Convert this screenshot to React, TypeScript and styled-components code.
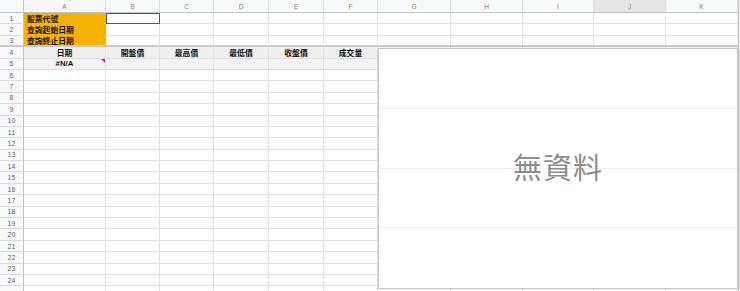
import React from "react";
import styled, { createGlobalStyle } from "styled-components";

const GlobalStyle = createGlobalStyle`
  html, body {
    margin: 0;
    padding: 0;
    background: #ffffff;
    overflow: hidden;
  }
  body {
    font-family: "Liberation Sans", "Noto Sans CJK TC", Arial, sans-serif;
  }
`;

const COLS = ["A", "B", "C", "D", "E", "F", "G", "H", "I", "J", "K"];
const WIDTHS = [82, 54, 54, 55, 55, 54, 73, 72, 71, 72, 72];
const ROW_H = 11.4;

const Sheet = styled.div`
  position: relative;
  width: 740px;
  height: 291px;
  overflow: hidden;
  background: #fff;
`;

const Grid = styled.div`
  display: grid;
  grid-template-columns: 24px ${WIDTHS.map((w) => `${w}px`).join(" ")} 2px;
  grid-auto-rows: ${ROW_H}px;
  grid-template-rows: 13px;
`;

const Corner = styled.div`
  box-sizing: border-box;
  background: #f8f9fa;
  border-right: 1px solid #c4c4c4;
  border-bottom: 1px solid #c4c4c4;
`;

const ColHead = styled.div<{ $active?: boolean }>`
  box-sizing: border-box;
  background: ${(p) => (p.$active ? "#e6e6e6" : "#f8f9fa")};
  border-right: 1px solid #dcdcdc;
  border-bottom: 1px solid #c4c4c4;
  color: #808080;
  font-size: 6.5px;
  display: flex;
  align-items: center;
  justify-content: center;
`;

const RowNum = styled.div<{ $freeze?: boolean }>`
  box-sizing: border-box;
  background: #f8f9fa;
  border-right: 1px solid #c4c4c4;
  border-bottom: ${(p) => (p.$freeze ? "2px solid #c8c8d0" : "1px solid #dcdcdc")};
  color: #666;
  font-size: 7px;
  display: flex;
  align-items: center;
  justify-content: center;
`;

const Cell = styled.div<{
  $bg?: string;
  $freeze?: boolean;
  $center?: boolean;
  $boxed?: boolean;
}>`
  position: relative;
  box-sizing: border-box;
  background: ${(p) => p.$bg || "#fff"};
  border-right: 1px solid ${(p) => (p.$bg === "#f6b400" ? "#f6b400" : "#e2e2e2")};
  border-bottom: ${(p) =>
    p.$freeze ? "2px solid #c8c8d0" : `1px solid ${p.$bg === "#f6b400" ? "#f6b400" : "#e2e2e2"}`};
  ${(p) => (p.$boxed ? "outline: 1px solid #555; outline-offset: -1px;" : "")}
  font-family: "Liberation Sans", "Noto Sans CJK TC", sans-serif;
  font-weight: 700;
  font-size: 7.8px;
  color: #111;
  display: flex;
  align-items: center;
  justify-content: ${(p) => (p.$center ? "center" : "flex-start")};
  padding-left: ${(p) => (p.$center ? "0" : "3px")};
  white-space: nowrap;
  overflow: hidden;
`;

const EdgeCell = styled.div`
  background: #ececec;
  border-left: 1px solid #c8c8c8;
`;

const ErrorMark = styled.span`
  position: absolute;
  top: 0;
  right: 0;
  width: 0;
  height: 0;
  border-top: 4px solid #e0341c;
  border-left: 4px solid transparent;
`;

const Chart = styled.div`
  position: absolute;
  left: 378px;
  top: 48px;
  width: 360px;
  height: 241px;
  box-sizing: border-box;
  background: #fff;
  border: 1px solid #c6c6c6;
  box-shadow: 0 0 2px rgba(0, 0, 0, 0.12);
  display: grid;
  grid-template-rows: repeat(4, 1fr);
`;

const Band = styled.div<{ $last?: boolean }>`
  border-bottom: ${(p) => (p.$last ? "none" : "1px solid #efefef")};
`;

const NoData = styled.div`
  position: absolute;
  inset: 0;
  display: flex;
  align-items: center;
  justify-content: center;
  padding-bottom: 6px;
  font-family: "Noto Sans CJK TC", sans-serif;
  font-size: 29px;
  color: #8c8c8c;
  letter-spacing: 1px;
`;

const labels = ["股票代號", "查詢起始日期", "查詢終止日期"];
const heads = ["日期", "開盤價", "最高價", "最低價", "收盤價", "成交量"];

function cellFor(row: number, col: number) {
  const freeze = row === 3;
  if (row <= 3 && col === 0) {
    return (
      <Cell key={col} $bg="#f6b400" $freeze={freeze}>
        {labels[row - 1]}
      </Cell>
    );
  }
  if (row === 1 && col === 1) return <Cell key={col} $boxed />;
  if (row === 4 && col < 6) {
    return (
      <Cell key={col} $bg="#efefef" $center>
        {heads[col]}
      </Cell>
    );
  }
  if (row === 5 && col < 6) {
    return (
      <Cell key={col} $bg="#f3f3f3" $center>
        {col === 0 && "#N/A"}
        {col === 0 && <ErrorMark />}
      </Cell>
    );
  }
  return <Cell key={col} $freeze={freeze} />;
}

export default function App() {
  const rows = Array.from({ length: 25 }, (_, i) => i + 1);
  return (
    <>
      <GlobalStyle />
      <Sheet>
        <Grid>
          <Corner />
          {COLS.map((c) => (
            <ColHead key={c} $active={c === "J"}>
              {c}
            </ColHead>
          ))}
          <EdgeCell />
          {rows.map((r) => (
            <React.Fragment key={r}>
              <RowNum $freeze={r === 3}>{r < 25 ? r : ""}</RowNum>
              {COLS.map((_, ci) => cellFor(r, ci))}
              <EdgeCell />
            </React.Fragment>
          ))}
        </Grid>
        <Chart>
          <Band />
          <Band />
          <Band />
          <Band $last />
          <NoData>無資料</NoData>
        </Chart>
      </Sheet>
    </>
  );
}
